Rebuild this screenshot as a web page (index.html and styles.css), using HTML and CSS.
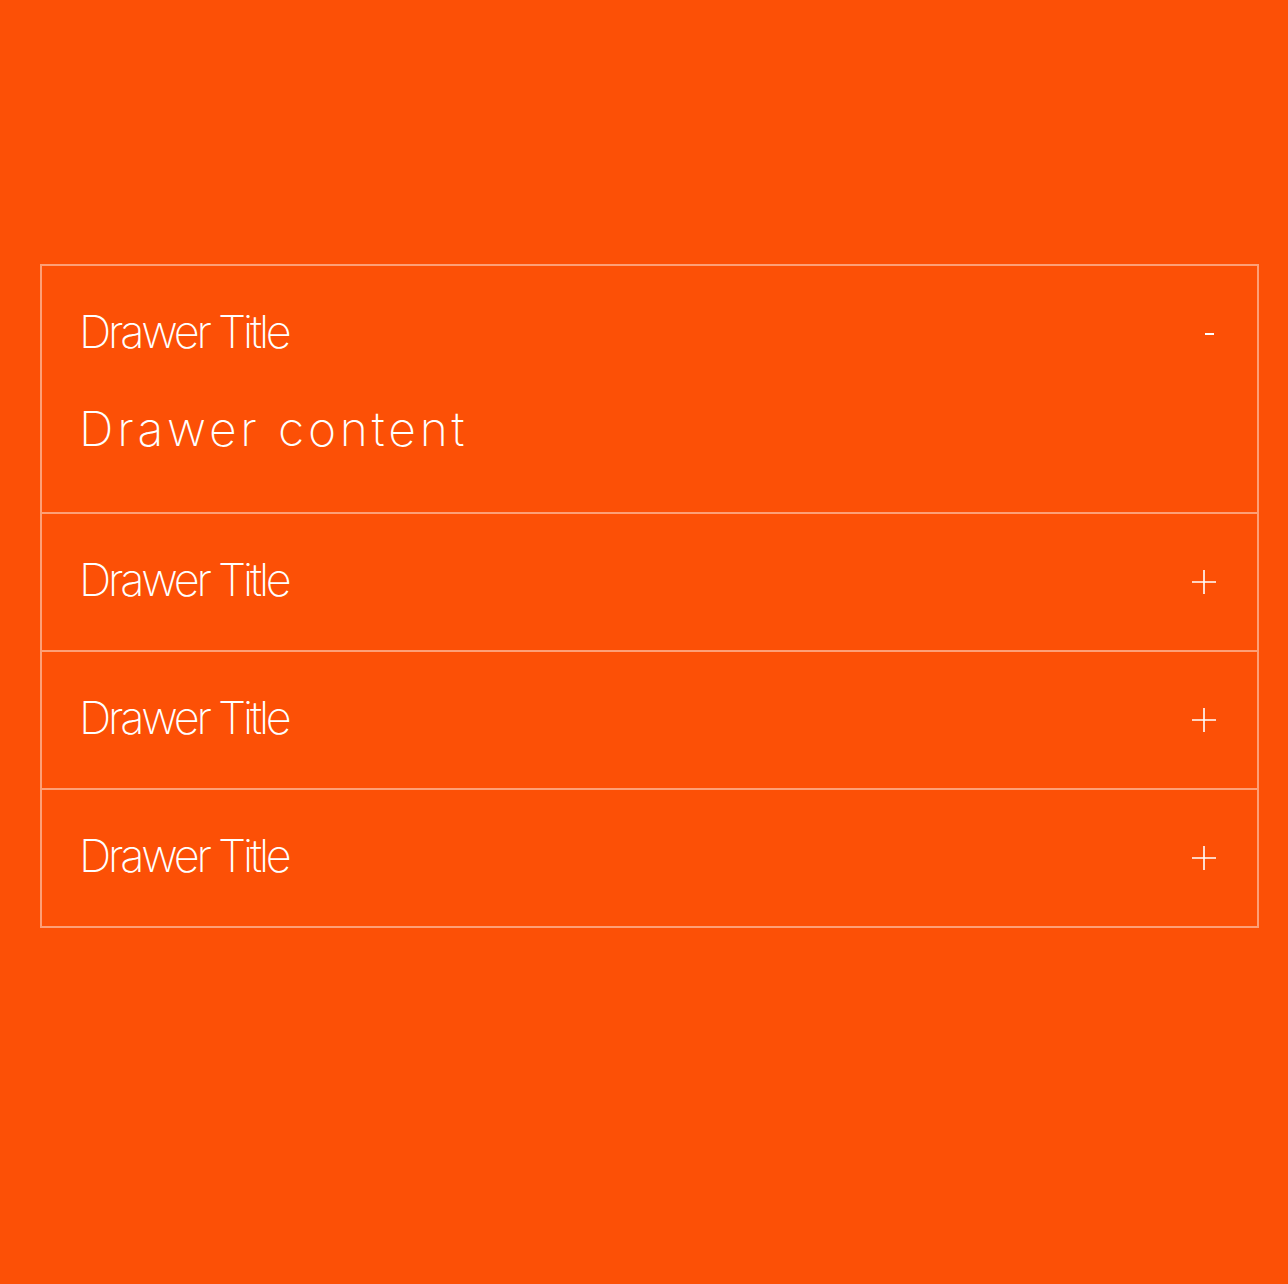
FILE: index.html
```html
<!DOCTYPE html>
<html>
<head>
<meta charset="utf-8">
<link rel="stylesheet" href="styles.css">
</head>
<body>
<div class="accordion">
  <div class="drawer open">
    <div class="header">
      <span class="title">Drawer Title</span>
      <span class="icon minus"></span>
    </div>
    <div class="content">Drawer content</div>
  </div>
  <div class="drawer">
    <div class="header">
      <span class="title">Drawer Title</span>
      <svg class="icon plus" width="26" height="26" viewBox="0 0 26 26"><path d="M1 13H25M13 1V25" stroke="#fff" stroke-width="1.6" fill="none"/></svg>
    </div>
  </div>
  <div class="drawer">
    <div class="header">
      <span class="title">Drawer Title</span>
      <svg class="icon plus" width="26" height="26" viewBox="0 0 26 26"><path d="M1 13H25M13 1V25" stroke="#fff" stroke-width="1.6" fill="none"/></svg>
    </div>
  </div>
  <div class="drawer">
    <div class="header">
      <span class="title">Drawer Title</span>
      <svg class="icon plus" width="26" height="26" viewBox="0 0 26 26"><path d="M1 13H25M13 1V25" stroke="#fff" stroke-width="1.6" fill="none"/></svg>
    </div>
  </div>
</div>
</body>
</html>
```
FILE: styles.css
```css
html, body {
  margin: 0;
  padding: 0;
  background: #fc5006;
  min-height: 100%;
}
body {
  font-family: Inter, "Helvetica Neue", Arial, sans-serif;
  color: #fff;
  padding: 264px 29px 0 40px;
  height: 1284px;
  box-sizing: border-box;
}
.accordion {
  border: 2px solid rgba(255, 255, 255, 0.45);
}
.drawer + .drawer {
  border-top: 2px solid rgba(255, 255, 255, 0.45);
}
.header {
  display: flex;
  align-items: center;
  justify-content: space-between;
  height: 136px;
  box-sizing: border-box;
  padding: 0 40px 6px 37px;
}
.title {
  font-size: 45px;
  font-weight: 200;
  letter-spacing: -3.2px;
  line-height: 57px;
}
.icon.minus {
  display: block;
  width: 9px;
  height: 2px;
  background: #fff;
  margin-right: 3px;
  margin-top: 6px;
}
.plus {
  display: block;
  margin-top: 6px;
}
.content {
  height: 113px;
  box-sizing: border-box;
  padding: 0 37px;
  margin-top: -3px;
  font-size: 48px;
  font-weight: 200;
  letter-spacing: 3.8px;
  line-height: 60px;
}
```
